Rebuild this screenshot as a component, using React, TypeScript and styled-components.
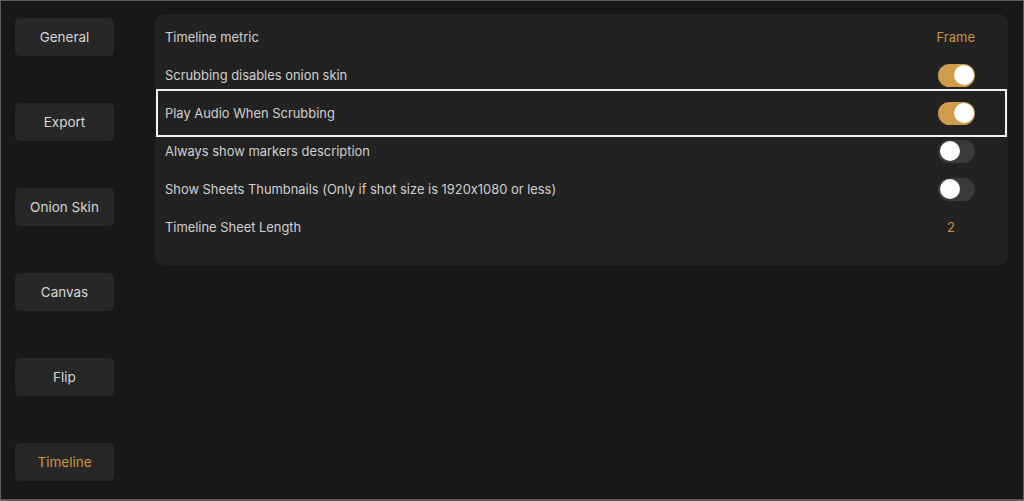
import styled, { createGlobalStyle } from 'styled-components'

const GlobalStyle = createGlobalStyle`
  html, body {
    margin: 0;
    padding: 0;
    background: #181818;
  }
  body {
    font-family: Inter, "Liberation Sans", sans-serif;
    font-feature-settings: 'calt' 0;
  }
`

const tabs = ['General', 'Export', 'Onion Skin', 'Canvas', 'Flip', 'Timeline']

type Setting =
  | { label: string, kind: 'value', value: string, inset: number }
  | { label: string, kind: 'toggle', on: boolean }

const settings: Setting[] = [
  { label: 'Timeline metric', kind: 'value', value: 'Frame', inset: 0 },
  { label: 'Scrubbing disables onion skin', kind: 'toggle', on: true },
  { label: 'Play Audio When Scrubbing', kind: 'toggle', on: true },
  { label: 'Always show markers description', kind: 'toggle', on: false },
  { label: 'Show Sheets Thumbnails (Only if shot size is 1920x1080 or less)', kind: 'toggle', on: false },
  { label: 'Timeline Sheet Length', kind: 'value', value: '2', inset: 20 }
]

function App () {
  return (
    <>
      <GlobalStyle />
      <Screen>
        <Sidebar>
          {tabs.map(t => (
            <TabButton key={t} $active={t === 'Timeline'}>{t}</TabButton>
          ))}
        </Sidebar>
        <Panel>
          {settings.map((s, i) => (
            <Row key={s.label} $focused={i === 2}>
              <Label>{s.label}</Label>
              {s.kind === 'value'
                ? <Value $inset={s.inset}>{s.value}</Value>
                : <Switch $on={s.on}><Knob /></Switch>}
            </Row>
          ))}
        </Panel>
      </Screen>
    </>
  )
}

const Screen = styled.div`
  box-sizing: border-box;
  width: 1024px;
  height: 501px;
  border: 1px solid #5c5c5c;
  border-bottom-width: 2px;
  background: #181818;
  display: flex;
  align-items: flex-start;
  overflow: hidden;
`
const Sidebar = styled.nav`
  display: flex;
  flex-direction: column;
  gap: 47px;
  padding: 17px 0 0 14px;
`
const TabButton = styled.div<{ $active?: boolean }>`
  width: 99px;
  height: 38px;
  border-radius: 5px;
  background: #272727;
  display: flex;
  align-items: center;
  justify-content: center;
  font-size: 13.5px;
  color: ${p => p.$active ? '#c8953f' : '#d6d6d6'};
`
const Panel = styled.section`
  margin: 13px 0 0 41px;
  width: 853px;
  box-sizing: border-box;
  padding: 4px 0 19px;
  border-radius: 9px;
  background: #222222;
`
const Row = styled.div<{ $focused?: boolean }>`
  position: relative;
  height: 38px;
  display: flex;
  align-items: center;
  justify-content: space-between;
  padding: 0 33px 0 10px;

  ${p => p.$focused && `
    &::after {
      content: '';
      position: absolute;
      top: -5px;
      bottom: -5px;
      left: 1px;
      right: 1px;
      border: 2px solid #f2f2f2;
      pointer-events: none;
    }
  `}
`
const Label = styled.span`
  font-size: 12.9px;
  color: #d0d0d0;
`
const Value = styled.span<{ $inset: number }>`
  font-size: 13px;
  color: #c8953f;
  margin-right: ${p => p.$inset}px;
`
const Switch = styled.div<{ $on: boolean }>`
  width: 37px;
  height: 23px;
  border-radius: 12px;
  background: ${p => p.$on ? '#cf9c4b' : '#3a3a3a'};
  box-sizing: border-box;
  padding: 1.5px;
  display: flex;
  justify-content: ${p => p.$on ? 'flex-end' : 'flex-start'};
`
const Knob = styled.div`
  width: 20px;
  height: 20px;
  border-radius: 50%;
  background: #ffffff;
`

export default App
